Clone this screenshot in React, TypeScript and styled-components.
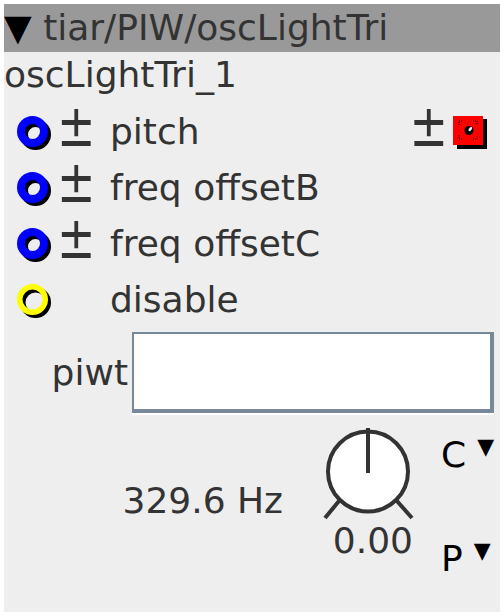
import styled, { createGlobalStyle } from "styled-components";

const GlobalStyle = createGlobalStyle`
  html, body {
    margin: 0;
    padding: 0;
    background: #fff;
  }
  body {
    font-family: "DejaVu Sans", Verdana, sans-serif;
  }
`;

const Panel = styled.div`
  margin: 4px;
  width: 496px;
  height: 608px;
  background: #eee;
  color: #333;
  font-size: 36px;
  line-height: 42px;
  overflow: hidden;
`;

const Header = styled.div`
  height: 48px;
  box-sizing: border-box;
  padding-top: 3px;
  background: #999;
  white-space: nowrap;
`;

const Caret = styled.span<{ $small?: boolean }>`
  color: #000;
  font-size: ${(p) => (p.$small ? "22px" : "inherit")};
  vertical-align: ${(p) => (p.$small ? "13px" : "baseline")};
  margin-left: ${(p) => (p.$small ? "11px" : "0")};
`;

const Title = styled.div`
  height: 52px;
  box-sizing: border-box;
  padding-top: 2px;
`;

const Row = styled.div`
  display: flex;
  align-items: center;
  height: 56px;
`;

const SocketCell = styled.div`
  width: 53px;
  box-sizing: border-box;
  padding-left: 11px;
  display: flex;
  align-items: center;
`;

const Sign = styled.span<{ $width?: number }>`
  flex: none;
  width: ${(p) => (p.$width ? `${p.$width}px` : "auto")};
  font-size: 46px;
  line-height: 30px;
  height: 30px;
  margin-top: -4px;
  transform: scaleY(1.28);
  transform-origin: 50% 31px;
`;

const Label = styled.span`
  white-space: nowrap;
`;

const RightGroup = styled.div`
  margin-left: auto;
  padding-right: 13px;
  display: flex;
  align-items: center;
  gap: 5px;
`;

const InputRow = styled.div`
  display: flex;
  align-items: center;
  justify-content: flex-end;
  margin-top: 4px;
  padding-right: 6px;
`;

const InputLabel = styled.label`
  margin-right: 4px;
`;

const TextBox = styled.input`
  width: 362px;
  height: 81px;
  box-sizing: border-box;
  margin: 0;
  border-style: solid;
  border-width: 2px 4px 4px 2px;
  border-color: #778899;
  background: #fff;
  box-shadow: 0 2px 0 #fff;
  outline: none;
  font: inherit;
`;

const Controls = styled.div`
  display: grid;
  grid-template-columns: 1fr 100px 56px;
  column-gap: 22px;
  padding-right: 3px;
  margin-top: 9px;
`;

const Freq = styled.div`
  align-self: center;
  text-align: right;
  padding-right: 14px;
  white-space: nowrap;
`;

const KnobCol = styled.div`
  display: flex;
  flex-direction: column;
`;

const KnobValue = styled.div`
  margin-top: -2px;
  text-align: right;
  padding-right: 6px;
`;

const ModeCol = styled.div`
  display: flex;
  flex-direction: column;
  gap: 54px;
  padding-top: 4px;
  color: #000;
  white-space: nowrap;
`;

const Socket = ({ color, width }: { color: string; width: number }) => {
  const r = 15.5 - width / 2;
  return (
    <svg width="36" height="36" viewBox="0 0 36 36">
      <circle cx="20.5" cy="20.5" r={r} fill="none" stroke="#000" strokeWidth={width} />
      <circle cx="17.5" cy="17.5" r={r} fill="none" stroke={color} strokeWidth={width} />
    </svg>
  );
};

const Pin = () => (
  <svg width="34" height="34" viewBox="0 0 34 34">
    <rect x="4" y="4" width="30" height="30" fill="#000" />
    <rect x="0" y="1" width="30" height="29" fill="#f00" />
    <g stroke="#000" strokeWidth="1" fill="none" strokeDasharray="1 1">
      <path d="M6 10V6H10" />
      <path d="M20 6H24V10" />
      <path d="M6 20V24H10" />
      <path d="M20 24H24V20" />
    </g>
    <circle cx="16" cy="15.5" r="4.5" fill="#000" />
    <ellipse cx="17.3" cy="14.2" rx="2.4" ry="1.3" fill="#fff" transform="rotate(-50 17.3 14.2)" />
  </svg>
);

const Knob = () => (
  <svg width="100" height="100" viewBox="0 0 100 100" style={{ display: "block" }}>
    <circle cx="49" cy="49.5" r="40" fill="#fff" stroke="#333" strokeWidth="4" />
    <g stroke="#333" strokeWidth="4">
      <line x1="49" y1="6" x2="49" y2="51" />
      <line x1="6" y1="96" x2="20" y2="79" />
      <line x1="78" y1="79" x2="93" y2="96" />
    </g>
  </svg>
);

const inputs = [
  { name: "pitch", color: "#00f", ring: 8, pm: true, out: true },
  { name: "freq offsetB", color: "#00f", ring: 8, pm: true, out: false },
  { name: "freq offsetC", color: "#00f", ring: 8, pm: true, out: false },
  { name: "disable", color: "#ff0", ring: 5.5, pm: false, out: false },
];

export default function App() {
  return (
    <>
      <GlobalStyle />
      <Panel>
        <Header>
          <Caret>▼</Caret> tiar/PIW/oscLightTri
        </Header>
        <Title>oscLightTri_1</Title>
        {inputs.map((it) => (
          <Row key={it.name}>
            <SocketCell>
              <Socket color={it.color} width={it.ring} />
            </SocketCell>
            <Sign $width={53}>{it.pm ? "±" : ""}</Sign>
            <Label>{it.name}</Label>
            {it.out && (
              <RightGroup>
                <Sign>±</Sign>
                <Pin />
              </RightGroup>
            )}
          </Row>
        ))}
        <InputRow>
          <InputLabel htmlFor="piwt">piwt</InputLabel>
          <TextBox id="piwt" type="text" />
        </InputRow>
        <Controls>
          <Freq>329.6 Hz</Freq>
          <KnobCol>
            <Knob />
            <KnobValue>0.00</KnobValue>
          </KnobCol>
          <ModeCol>
            <div>
              C<Caret $small>▼</Caret>
            </div>
            <div>
              P<Caret $small>▼</Caret>
            </div>
          </ModeCol>
        </Controls>
      </Panel>
    </>
  );
}
